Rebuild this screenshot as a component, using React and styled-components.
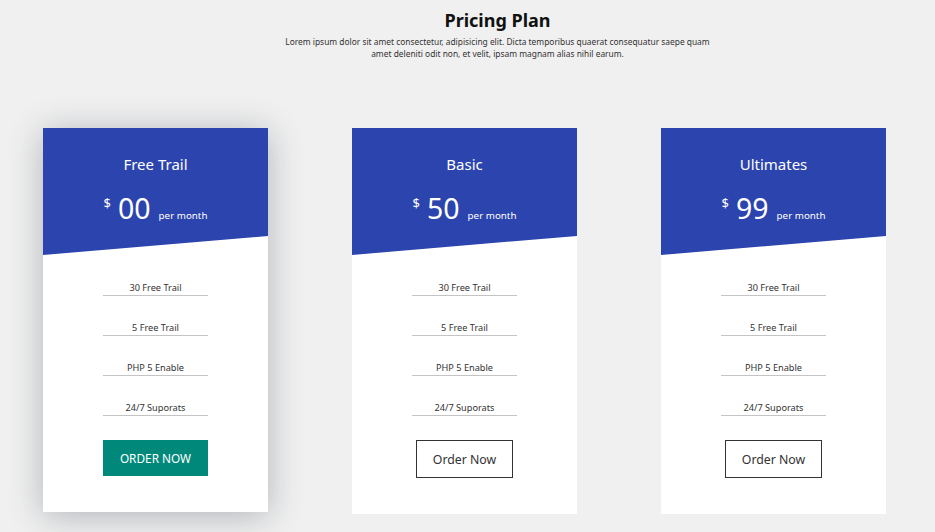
import React from 'react'
import styled, { createGlobalStyle } from 'styled-components'

const GlobalStyle = createGlobalStyle`
  * { box-sizing: border-box; }
  body {
    margin: 0;
    background: #f0f0f0;
    font-family: "Noto Sans", "Open Sans", sans-serif;
    color: #222;
  }`

const plans = [
    { name: "Free Trail", price: "00", featured: true },
    { name: "Basic", price: "50" },
    { name: "Ultimates", price: "99" },
]

const features = ["30 Free Trail", "5 Free Trail", "PHP 5 Enable", "24/7 Suporats"]

const Page = styled.main`
  min-height: 532px;
  display: flex;
  flex-direction: column;`

const Intro = styled.header`
  display: flex;
  flex-direction: column;
  align-items: center;
  padding: 8px 0 0 60px;`

const Title = styled.h1`
  margin: 0;
  font-size: 18px;
  line-height: 24px;
  font-weight: 700;
  color: #111;`

const Lead = styled.p`
  margin: 4px 0 0;
  max-width: 440px;
  font-size: 8.4px;
  line-height: 12px;
  text-align: center;
  color: #333;`

const Cards = styled.section`
  display: flex;
  align-items: flex-start;
  gap: 84px;
  padding: 0 0 0 43px;
  margin-top: 68px;`

const Card = styled.article`
  width: 225px;
  background: #fff;
  display: flex;
  flex-direction: column;
  align-items: center;
  padding-bottom: 36px;
  box-shadow: ${p => p.$featured ? "0 4px 32px rgba(45, 55, 70, 0.32)" : "none"};`

const Head = styled.div`
  width: 100%;
  height: 127px;
  background: #2c44ad;
  color: #fff;
  display: flex;
  flex-direction: column;
  align-items: center;
  padding-top: 26px;
  clip-path: polygon(0 0, 100% 0, 100% 85%, 0 100%);`

const PlanName = styled.h2`
  margin: 0;
  font-size: 15px;
  line-height: 20px;
  font-weight: 400;`

const Price = styled.div`
  margin-top: 11px;
  line-height: 36px;
  white-space: nowrap;`

const Currency = styled.span`
  font-size: 13px;
  vertical-align: 11px;
  margin-right: 7px;`

const Amount = styled.span`
  font-size: 28.5px;`

const Per = styled.span`
  font-size: 9.8px;
  margin-left: 8px;`

const Features = styled.ul`
  list-style: none;
  margin: 0;
  padding: 26px 0 0;
  display: flex;
  flex-direction: column;
  gap: 25px;`

const Feature = styled.li`
  width: 105px;
  font-size: 9.2px;
  line-height: 14px;
  text-align: center;
  color: #333;
  border-bottom: 1px solid #c4c4c4;`

const OrderButton = styled.button`
  margin-top: 24px;
  font-family: inherit;
  cursor: pointer;
  ${p => p.$featured ? `
    width: 105px;
    height: 36px;
    background: #00897b;
    color: #fff;
    border: none;
    font-size: 11.8px;
    text-transform: uppercase;
  ` : `
    width: 97px;
    height: 38px;
    background: #fff;
    color: #333;
    border: 1px solid #333;
    font-size: 12.3px;
  `}`

const App = () => {
    return (
        <Page>
            <GlobalStyle/>
            <Intro>
                <Title>Pricing Plan</Title>
                <Lead>
                    Lorem ipsum dolor sit amet consectetur, adipisicing elit. Dicta temporibus quaerat consequatur saepe quam amet deleniti odit non, et velit, ipsam magnam alias nihil earum.
                </Lead>
            </Intro>
            <Cards>
                {plans.map(plan => (
                    <Card key={plan.name} $featured={plan.featured}>
                        <Head>
                            <PlanName>{plan.name}</PlanName>
                            <Price>
                                <Currency>$</Currency>
                                <Amount>{plan.price}</Amount>
                                <Per>per month</Per>
                            </Price>
                        </Head>
                        <Features>
                            {features.map(f => <Feature key={f}>{f}</Feature>)}
                        </Features>
                        <OrderButton $featured={plan.featured}>Order Now</OrderButton>
                    </Card>
                ))}
            </Cards>
        </Page>
    );
};

export default App;
